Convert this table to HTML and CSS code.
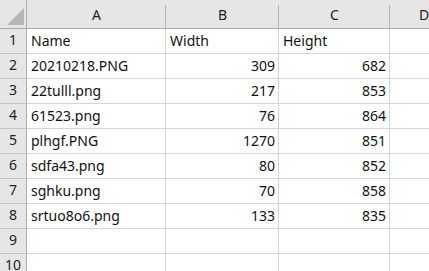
FILE: index.html
```html
<!DOCTYPE html>
<html>
<head>
<meta charset="utf-8">
<link rel="stylesheet" href="styles.css">
</head>
<body>
<div class="sheet">
  <div class="corner"><svg class="tri" width="17" height="17" viewBox="0 0 17 17"><polygon points="0,17 17,0 17,17" fill="#b5b5b5"/></svg></div>
  <div class="colhead">A</div>
  <div class="colhead">B</div>
  <div class="colhead">C</div>
  <div class="colhead">D</div>

  <div class="rowhead">1</div><div class="cell">Name</div><div class="cell">Width</div><div class="cell">Height</div><div class="cell"></div>
  <div class="rowhead">2</div><div class="cell">20210218.PNG</div><div class="cell num">309</div><div class="cell num">682</div><div class="cell"></div>
  <div class="rowhead">3</div><div class="cell">22tulll.png</div><div class="cell num">217</div><div class="cell num">853</div><div class="cell"></div>
  <div class="rowhead">4</div><div class="cell">61523.png</div><div class="cell num">76</div><div class="cell num">864</div><div class="cell"></div>
  <div class="rowhead">5</div><div class="cell">plhgf.PNG</div><div class="cell num">1270</div><div class="cell num">851</div><div class="cell"></div>
  <div class="rowhead">6</div><div class="cell">sdfa43.png</div><div class="cell num">80</div><div class="cell num">852</div><div class="cell"></div>
  <div class="rowhead">7</div><div class="cell">sghku.png</div><div class="cell num">70</div><div class="cell num">858</div><div class="cell"></div>
  <div class="rowhead">8</div><div class="cell">srtuo8o6.png</div><div class="cell num">133</div><div class="cell num">835</div><div class="cell"></div>
  <div class="rowhead">9</div><div class="cell"></div><div class="cell"></div><div class="cell"></div><div class="cell"></div>
  <div class="rowhead">10</div><div class="cell"></div><div class="cell"></div><div class="cell"></div><div class="cell"></div>
</div>
</body>
</html>
```
FILE: styles.css
```css
html, body {
  margin: 0;
  padding: 0;
  background: #ffffff;
  overflow: hidden;
}
.sheet {
  display: grid;
  grid-template-columns: 27px 139px 113px 111px 68px;
  grid-template-rows: 29px repeat(10, 25px);
  font-family: "Noto Sans", "Noto Sans CJK JP", sans-serif;
  font-size: 14px;
  color: #111;
  width: 458px;
}
.corner {
  background: #e6e6e6;
  border-right: 1px solid #ababab;
  border-bottom: 1px solid #ababab;
  display: flex;
  align-items: flex-end;
  justify-content: flex-end;
  padding: 0 2px 3px 0;
}
.tri { display: block; }
.colhead {
  background: #e6e6e6 linear-gradient(#b4b4b4, #b4b4b4) right bottom / 1px 23px no-repeat;
  border-bottom: 1px solid #ababab;
  display: flex;
  align-items: flex-end;
  justify-content: center;
  padding-bottom: 4px;
  color: #222;
  line-height: 18px;
}
.rowhead {
  background: #e6e6e6;
  border-right: 1px solid #ababab;
  border-bottom: 1px solid #c4c4c4;
  display: flex;
  align-items: flex-end;
  justify-content: center;
  padding-bottom: 4px;
  color: #222;
  line-height: 18px;
}
.cell {
  border-right: 1px solid #d4d4d4;
  border-bottom: 1px solid #d4d4d4;
  display: flex;
  align-items: flex-end;
  padding: 0 3px 3px 4px;
  line-height: 18px;
  white-space: nowrap;
  overflow: hidden;
}
.cell.num {
  justify-content: flex-end;
}
```
